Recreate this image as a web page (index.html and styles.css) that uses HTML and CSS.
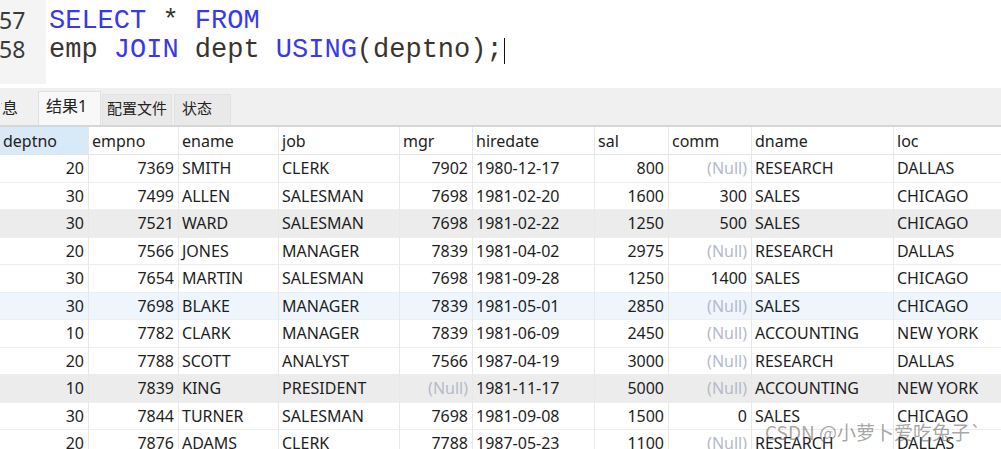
FILE: index.html
```html
<!DOCTYPE html>
<html>
<head>
<meta charset="utf-8">
<link rel="stylesheet" href="styles.css">
</head>
<body>
<div class="page">
  <div class="editor">
    <div class="gutter">
      <div class="ln">57</div>
      <div class="ln">58</div>
    </div>
    <div class="code">
      <div class="line"><span class="kw">SELECT</span> * <span class="kw">FROM</span></div>
      <div class="line">emp <span class="kw">JOIN</span> dept <span class="kw">USING</span>(deptno);<span class="caret"></span></div>
    </div>
  </div>
  <div class="tabs">
    <div class="tab first">信息</div>
    <div class="tab active">结果1</div>
    <div class="tab cfg">配置文件</div>
    <div class="tab stat">状态</div>
  </div>
  <div class="grid">
    <div class="row head">
      <div class="c sel">deptno</div><div class="c">empno</div><div class="c">ename</div><div class="c">job</div><div class="c">mgr</div><div class="c">hiredate</div><div class="c">sal</div><div class="c">comm</div><div class="c">dname</div><div class="c">loc</div>
    </div>
    <div class="row">
      <div class="c r">20</div><div class="c r">7369</div><div class="c">SMITH</div><div class="c">CLERK</div><div class="c r">7902</div><div class="c">1980-12-17</div><div class="c r">800</div><div class="c r null">(Null)</div><div class="c">RESEARCH</div><div class="c">DALLAS</div>
    </div>
    <div class="row">
      <div class="c r">30</div><div class="c r">7499</div><div class="c">ALLEN</div><div class="c">SALESMAN</div><div class="c r">7698</div><div class="c">1981-02-20</div><div class="c r">1600</div><div class="c r">300</div><div class="c">SALES</div><div class="c">CHICAGO</div>
    </div>
    <div class="row gray">
      <div class="c r">30</div><div class="c r">7521</div><div class="c">WARD</div><div class="c">SALESMAN</div><div class="c r">7698</div><div class="c">1981-02-22</div><div class="c r">1250</div><div class="c r">500</div><div class="c">SALES</div><div class="c">CHICAGO</div>
    </div>
    <div class="row">
      <div class="c r">20</div><div class="c r">7566</div><div class="c">JONES</div><div class="c">MANAGER</div><div class="c r">7839</div><div class="c">1981-04-02</div><div class="c r">2975</div><div class="c r null">(Null)</div><div class="c">RESEARCH</div><div class="c">DALLAS</div>
    </div>
    <div class="row">
      <div class="c r">30</div><div class="c r">7654</div><div class="c">MARTIN</div><div class="c">SALESMAN</div><div class="c r">7698</div><div class="c">1981-09-28</div><div class="c r">1250</div><div class="c r">1400</div><div class="c">SALES</div><div class="c">CHICAGO</div>
    </div>
    <div class="row blue">
      <div class="c r">30</div><div class="c r">7698</div><div class="c">BLAKE</div><div class="c">MANAGER</div><div class="c r">7839</div><div class="c">1981-05-01</div><div class="c r">2850</div><div class="c r null">(Null)</div><div class="c">SALES</div><div class="c">CHICAGO</div>
    </div>
    <div class="row">
      <div class="c r">10</div><div class="c r">7782</div><div class="c">CLARK</div><div class="c">MANAGER</div><div class="c r">7839</div><div class="c">1981-06-09</div><div class="c r">2450</div><div class="c r null">(Null)</div><div class="c">ACCOUNTING</div><div class="c">NEW YORK</div>
    </div>
    <div class="row">
      <div class="c r">20</div><div class="c r">7788</div><div class="c">SCOTT</div><div class="c">ANALYST</div><div class="c r">7566</div><div class="c">1987-04-19</div><div class="c r">3000</div><div class="c r null">(Null)</div><div class="c">RESEARCH</div><div class="c">DALLAS</div>
    </div>
    <div class="row gray">
      <div class="c r">10</div><div class="c r">7839</div><div class="c">KING</div><div class="c">PRESIDENT</div><div class="c r null">(Null)</div><div class="c">1981-11-17</div><div class="c r">5000</div><div class="c r null">(Null)</div><div class="c">ACCOUNTING</div><div class="c">NEW YORK</div>
    </div>
    <div class="row">
      <div class="c r">30</div><div class="c r">7844</div><div class="c">TURNER</div><div class="c">SALESMAN</div><div class="c r">7698</div><div class="c">1981-09-08</div><div class="c r">1500</div><div class="c r">0</div><div class="c">SALES</div><div class="c">CHICAGO</div>
    </div>
    <div class="row">
      <div class="c r">20</div><div class="c r">7876</div><div class="c">ADAMS</div><div class="c">CLERK</div><div class="c r">7788</div><div class="c">1987-05-23</div><div class="c r">1100</div><div class="c r null">(Null)</div><div class="c">RESEARCH</div><div class="c">DALLAS</div>
    </div>
  </div>
  <div class="watermark">CSDN @小萝卜爱吃兔子`</div>
</div>
</body>
</html>
```
FILE: styles.css
```css
html, body {
  margin: 0;
  padding: 0;
  background: #ffffff;
}
.page {
  position: relative;
  width: 1001px;
  height: 449px;
  overflow: hidden;
  font-family: "Noto Sans", "Noto Sans CJK SC", sans-serif;
}
.editor {
  display: flex;
  height: 88px;
  background: #ffffff;
}
.gutter {
  width: 46px;
  height: 84px;
  background: #f4f4f4;
  padding-top: 6px;
  box-sizing: border-box;
}
.ln {
  height: 29px;
  line-height: 29px;
  font-family: "Noto Sans", sans-serif;
  font-size: 23px;
  color: #3a3a3a;
  margin-left: -1px;
}
.code {
  padding-left: 3px;
  padding-top: 7px;
  font-family: "Liberation Mono", monospace;
  font-size: 27px;
  color: #3a342e;
}
.line {
  height: 29px;
  line-height: 29px;
  white-space: pre;
  display: flex;
  align-items: center;
}
.kw {
  color: #3838ec;
}
.caret {
  display: inline-block;
  width: 1px;
  height: 26px;
  background: #111;
  margin-left: 1px;
}
.tabs {
  display: flex;
  align-items: flex-end;
  height: 39px;
  background: #f0f0f0;
  border-bottom: 2px solid #d6d6d6;
  box-sizing: border-box;
}
.tab {
  height: 31px;
  line-height: 26px;
  font-size: 15px;
  color: #222;
  background: #e9e9e9;
  border: 1px solid #e2e2e2;
  border-bottom: none;
  box-sizing: border-box;
  white-space: nowrap;
}
.tab.first {
  width: 36px;
  font-size: 16px;
  text-indent: -15px;
  overflow: hidden;
  background: transparent;
  border-color: transparent;
}
.tab.active {
  margin-left: 2px;
  width: 63px;
  height: 34px;
  line-height: 28px;
  padding-left: 7px;
  font-size: 16px;
  background: #f8f8f8;
  border-color: #e0e0e0;
}
.tab.cfg {
  margin-left: 1px;
  width: 70px;
  padding-left: 4px;
}
.tab.stat {
  margin-left: 2px;
  width: 57px;
  padding-left: 7px;
}
.grid {
  display: flex;
  flex-direction: column;
}
.row {
  display: grid;
  grid-template-columns: 89px 90px 100px 121px 73px 122px 74px 83px 142px 120px;
  height: 27.5px;
  background: #ffffff;
}
.row.head {
  height: 28px;
}
.row.gray {
  background: #ececec;
}
.row.blue {
  background: #eef5fc;
}
.c {
  border-right: 1px solid #e8e8e8;
  border-bottom: 1px solid #eeeeee;
  padding: 0 4px 0 3px;
  font-size: 16px;
  color: #1e1e1e;
  display: flex;
  align-items: center;
  white-space: nowrap;
  overflow: hidden;
}
.row.head .c {
  border-bottom: 1px solid #e4e4e4;
  color: #222;
}
.c.sel {
  background: #d8e9f8;
}
.c.r {
  justify-content: flex-end;
}
.c.null {
  color: #b4bac8;
}
.watermark {
  position: absolute;
  left: 765px;
  top: 418px;
  font-family: "Noto Sans CJK SC", sans-serif;
  font-size: 19px;
  color: rgba(90, 90, 90, 0.55);
  white-space: nowrap;
}
```
